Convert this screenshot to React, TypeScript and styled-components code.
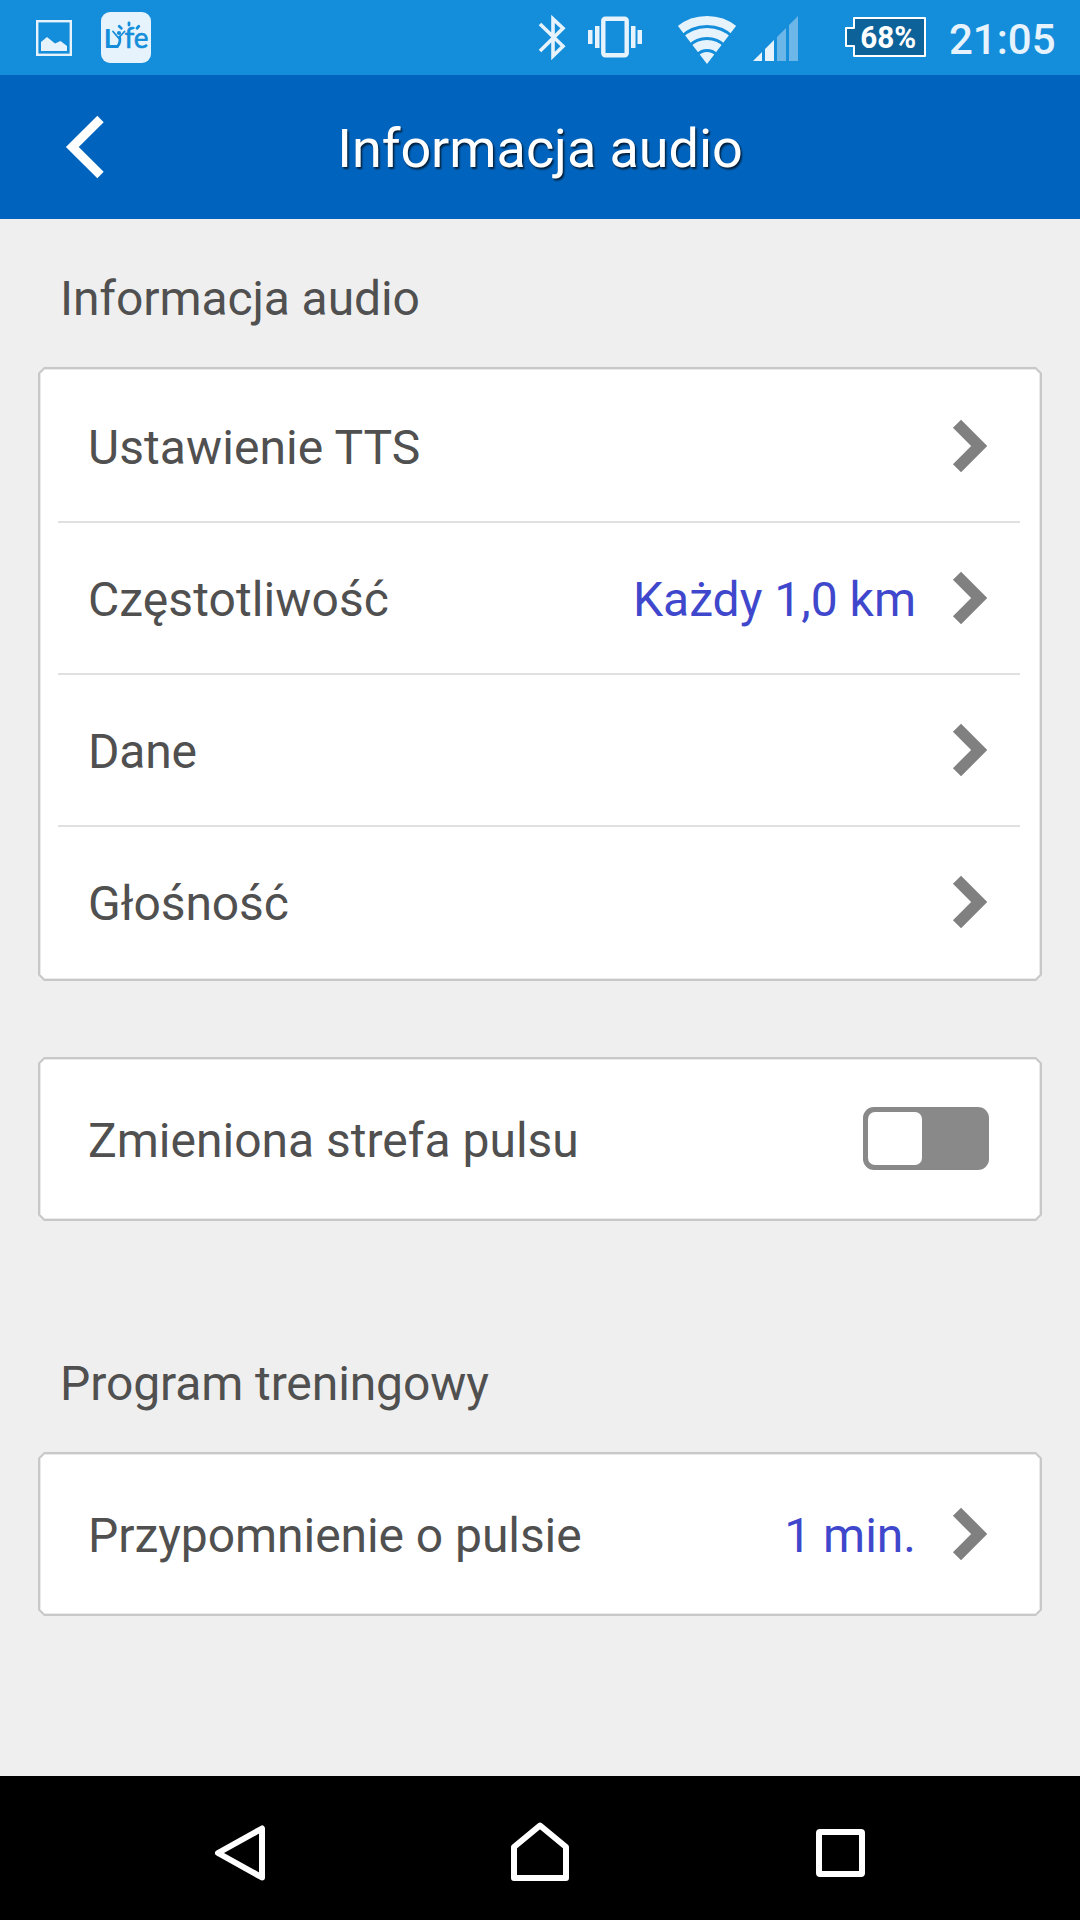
import React from "react";
import styled, { createGlobalStyle } from "styled-components";

const GlobalStyle = createGlobalStyle`
  *, *::before, *::after { box-sizing: border-box; }
  html, body { margin: 0; padding: 0; background: #efefef; }
  body { font-family: Roboto, "Noto Sans", sans-serif; }
  svg { display: block; flex: none; }
`;

const Screen = styled.div`
  width: 1080px;
  height: 1920px;
  display: flex;
  flex-direction: column;
  background: #efefef;
  overflow: hidden;
`;

const StatusBar = styled.div`
  height: 75px;
  flex: none;
  display: flex;
  justify-content: space-between;
  padding: 0 24px 0 36px;
  background: #148ddb;
`;

const StatusGroup = styled.div`
  display: flex;
  align-items: flex-start;
`;

const StatusIcon = styled.svg<{ $left?: number }>`
  margin-left: ${(p) => p.$left ?? 0}px;
`;

const Clock = styled.span`
  width: 107px;
  margin-left: 23px;
  font-size: 42px;
  font-weight: 500;
  line-height: 79px;
  color: #e6f3fc;
  white-space: nowrap;
`;

const Header = styled.header`
  height: 144px;
  flex: none;
  display: grid;
  grid-template-columns: 160px 1fr 160px;
  align-items: center;
  background: #0064be;
`;

const BackButton = styled.button`
  height: 144px;
  padding: 0 0 0 60px;
  border: 0;
  background: none;
`;

const Title = styled.h1`
  margin: 0;
  padding-top: 4px;
  font-size: 54px;
  font-weight: 400;
  line-height: 72px;
  letter-spacing: -0.08px;
  text-align: center;
  color: #fff;
  text-shadow: 1.5px 1.5px 2px rgba(0, 0, 0, 0.7);
`;

const Content = styled.main`
  flex: 1;
  display: flex;
  flex-direction: column;
  padding: 0 38px;
`;

const SectionLabel = styled.h2<{ $top: number }>`
  margin: ${(p) => p.$top}px 0 36px 22px;
  font-size: 48px;
  font-weight: 400;
  line-height: 64px;
  letter-spacing: -0.1px;
  color: #505050;
`;

const Card = styled.section<{ $top?: number }>`
  margin-top: ${(p) => p.$top ?? 0}px;
  padding: 2px;
  background: #c8c8c8;
  clip-path: polygon(6px 0, calc(100% - 6px) 0, 100% 6px, 100% calc(100% - 6px), calc(100% - 6px) 100%, 6px 100%, 0 calc(100% - 6px), 0 6px);
`;

const CardBody = styled.div`
  padding: 2px 20px 0 18px;
  background: #fff;
  box-shadow: inset 0 0 0 1px #eaeaea;
  clip-path: polygon(5px 0, calc(100% - 5px) 0, 100% 5px, 100% calc(100% - 5px), calc(100% - 5px) 100%, 5px 100%, 0 calc(100% - 5px), 0 5px);
`;

const Row = styled.div<{ $height?: number }>`
  height: ${(p) => p.$height ?? 152}px;
  display: flex;
  align-items: center;
  padding: 0 33px 0 30px;
  border-bottom: 2px solid #e0e0e0;
  &:last-child { border-bottom-color: transparent; }
`;

const Label = styled.span<{ $tracking?: number }>`
  flex: 1;
  padding-top: 3px;
  font-size: 48px;
  line-height: 64px;
  letter-spacing: ${(p) => p.$tracking ?? 0}px;
  color: #505050;
`;

const Value = styled.span`
  padding-top: 3px;
  margin-right: 36px;
  font-size: 48px;
  line-height: 64px;
  color: #3f48cc;
`;

const Switch = styled.div`
  width: 126px;
  height: 63px;
  display: flex;
  padding: 5px;
  margin: 0 -2px 2px 0;
  border-radius: 11px;
  background: #898989;
`;

const Knob = styled.div`
  width: 54px;
  height: 53px;
  border-radius: 7px;
  background: #fff;
`;

const NavBar = styled.nav`
  height: 144px;
  flex: none;
  display: grid;
  grid-template-columns: repeat(3, 300px);
  justify-content: center;
  justify-items: center;
  align-items: center;
  padding-top: 10px;
  background: #000;
`;

const Chevron = () => (
  <svg width="35" height="54" viewBox="0 0 35 54">
    <path d="M5 4.8 27.2 27 5 49.2" fill="none" stroke="#808080" strokeWidth="11.5" />
  </svg>
);

const PictureIcon = () => (
  <StatusIcon width="36" height="75" viewBox="0 0 36 75">
    <rect x="1.2" y="21.2" width="33.6" height="33.6" fill="none" stroke="#e6f3fc" strokeWidth="2.4" />
    <path d="M5 51V42L11 37 19 43.5 24.5 41 31 46V51Z" fill="#e6f3fc" />
  </StatusIcon>
);

const LifeIcon = () => (
  <StatusIcon $left={29} width="50" height="75" viewBox="101 0 50 75">
    <rect x="101" y="12" width="50" height="51" rx="9" fill="#e6f3fc" />
    <g fill="#148ddb" fontFamily="Lato, sans-serif">
      <text x="103.8" y="48" fontSize="27" fontWeight="700">L</text>
      <text x="124.5" y="48" fontSize="29" fontWeight="400" stroke="#148ddb" strokeWidth="0.6" textLength="24" lengthAdjust="spacingAndGlyphs">fe</text>
      <circle cx="119" cy="33" r="2.1" />
    </g>
    <g fill="none" stroke="#148ddb" strokeLinecap="round">
      <path d="M113 31.5 118.5 38 124.5 31.5" strokeWidth="1.8" />
      <path d="M119.5 37Q121 42 117.5 46.5H114" strokeWidth="2.8" />
      <path d="M119.2 26.3 121.3 28.2M129 23V25M138.8 26.3 137 28.2" strokeWidth="2.8" />
    </g>
  </StatusIcon>
);

const BluetoothIcon = () => (
  <StatusIcon width="28" height="75" viewBox="538 0 28 75">
    <path d="M540 24 563 46.3 553 56V19L563 28.3 540 51" fill="none" stroke="#e6f3fc" strokeWidth="3.6" />
  </StatusIcon>
);

const VibrateIcon = () => (
  <StatusIcon $left={22} width="54" height="75" viewBox="588 0 54 75">
    <rect x="603.3" y="18.8" width="23.4" height="36.4" rx="2" fill="none" stroke="#e6f3fc" strokeWidth="4.4" />
    <path d="M588 30h4.5v14H588zM595 26h4.5v22H595zM631 26h4.5v22H631zM637.5 30h4.5v14h-4.5z" fill="#e6f3fc" />
  </StatusIcon>
);

const WifiIcon = () => (
  <StatusIcon $left={35} width="60" height="75" viewBox="677 0 60 75">
    <defs>
      <clipPath id="fan">
        <path d="M707 64 670 15.5V10H744V15.5Z" />
      </clipPath>
    </defs>
    <g clipPath="url(#fan)" fill="none" stroke="#e6f3fc">
      <circle cx="707" cy="64" r="43.5" strokeWidth="9" />
      <circle cx="707" cy="64" r="31.5" strokeWidth="9" />
      <circle cx="707" cy="64" r="19.5" strokeWidth="9" />
      <circle cx="707" cy="64" r="12" fill="#e6f3fc" stroke="none" />
    </g>
  </StatusIcon>
);

const SignalIcon = () => (
  <StatusIcon $left={16} width="45" height="75" viewBox="753 0 45 75">
    <path d="M753 61 762 52V61ZM765 61V49L774 40V61Z" fill="#e6f3fc" />
    <path d="M777 61V37L786 28V61ZM789 61V25L798 16V61Z" fill="#6cb7e8" />
  </StatusIcon>
);

const BatteryIcon = () => (
  <StatusIcon $left={47} width="81" height="75" viewBox="845 0 81 75">
    <path d="M854 18H925V56H854V46H846V28H854Z" fill="#0c6299" stroke="#fff" strokeWidth="2" strokeLinejoin="round" />
    <text x="860.3" y="48" fill="#fff" fontFamily="Roboto, sans-serif" fontSize="31" fontWeight="700" textLength="56" lengthAdjust="spacingAndGlyphs">68%</text>
  </StatusIcon>
);

const settings = [
  { label: "Ustawienie TTS", tracking: 0.08 },
  { label: "Częstotliwość", value: "Każdy 1,0 km", tracking: 0.08 },
  { label: "Dane", tracking: -0.2 },
  { label: "Głośność", tracking: -0.1 },
];

export default function App() {
  return (
    <>
      <GlobalStyle />
      <Screen>
        <StatusBar>
          <StatusGroup>
            <PictureIcon />
            <LifeIcon />
          </StatusGroup>
          <StatusGroup>
            <BluetoothIcon />
            <VibrateIcon />
            <WifiIcon />
            <SignalIcon />
            <BatteryIcon />
            <Clock>21:05</Clock>
          </StatusGroup>
        </StatusBar>
        <Header>
          <BackButton aria-label="Wstecz">
            <svg width="50" height="66" viewBox="60 114 50 66">
              <path d="M100.5 119 72.3 147 100.5 175" fill="none" stroke="#fff" strokeWidth="9" />
            </svg>
          </BackButton>
          <Title>Informacja audio</Title>
        </Header>
        <Content>
          <SectionLabel $top={48}>Informacja audio</SectionLabel>
          <Card>
            <CardBody>
              {settings.map((s) => (
                <Row key={s.label}>
                  <Label $tracking={s.tracking}>{s.label}</Label>
                  {s.value && <Value>{s.value}</Value>}
                  <Chevron />
                </Row>
              ))}
            </CardBody>
          </Card>
          <Card $top={76}>
            <CardBody>
              <Row $height={158}>
                <Label>Zmieniona strefa pulsu</Label>
                <Switch role="switch" aria-checked={false}>
                  <Knob />
                </Switch>
              </Row>
            </CardBody>
          </Card>
          <SectionLabel $top={131}>Program treningowy</SectionLabel>
          <Card>
            <CardBody>
              <Row $height={158}>
                <Label $tracking={-0.06}>Przypomnienie o pulsie</Label>
                <Value>1 min.</Value>
                <Chevron />
              </Row>
            </CardBody>
          </Card>
        </Content>
        <NavBar>
          <svg width="60" height="66" viewBox="210 1820 60 66">
            <path d="M262 1828.5V1877.5L218 1853Z" fill="none" stroke="#fff" strokeWidth="6" strokeLinejoin="round" />
          </svg>
          <svg width="60" height="66" viewBox="510 1820 60 66">
            <path d="M514 1878V1847L540 1825.5 566 1847V1878Z" fill="none" stroke="#fff" strokeWidth="6" strokeLinejoin="round" />
          </svg>
          <svg width="60" height="66" viewBox="810 1820 60 66">
            <rect x="819" y="1832" width="43" height="42" rx="1" fill="none" stroke="#fff" strokeWidth="6" />
          </svg>
        </NavBar>
      </Screen>
    </>
  );
}
